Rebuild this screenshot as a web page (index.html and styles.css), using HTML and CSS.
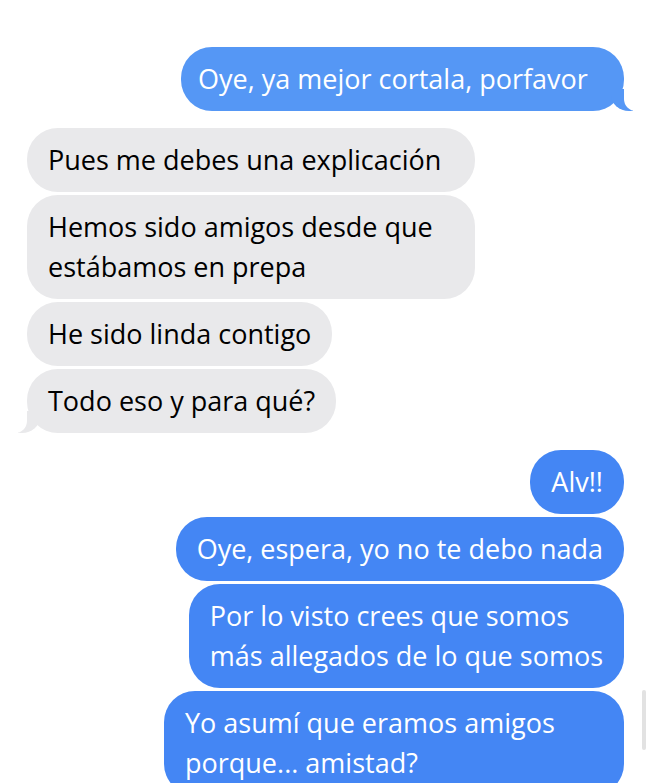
FILE: index.html
```html
<!DOCTYPE html>
<html lang="es">
<head>
    <meta charset="UTF-8">
    <meta name="viewport" content="width=device-width, initial-scale=1.0">
    <title>Mensajes</title>
    <link rel="stylesheet" href="styles.css">
</head>
<body>
    <div class="chat">
        <div class="group">
            <p class="bubble sent tail opener">Oye, ya mejor cortala, porfavor</p>
        </div>

        <div class="group">
            <p class="bubble received wide">Pues me debes una explicación</p>
            <p class="bubble received wide">Hemos sido amigos desde que<br>estábamos en prepa</p>
            <p class="bubble received">He sido linda contigo</p>
            <p class="bubble received tail">Todo eso y para qué?</p>
        </div>

        <div class="group">
            <p class="bubble sent">Alv!!</p>
            <p class="bubble sent">Oye, espera, yo no te debo nada</p>
            <p class="bubble sent">Por lo visto crees que somos<br>más allegados de lo que somos</p>
            <p class="bubble sent widest">Yo asumí que eramos amigos<br>porque... amistad?</p>
        </div>

        <div class="scrollbar"></div>
    </div>
</body>
</html>
```

FILE: styles.css
```css
body {
    font-family: "Open Sans", Lato, Arial, sans-serif;
    background-color: #fff;
    margin: 0;
    padding: 0;
}

.chat {
    position: relative;
    height: 783px;
    overflow: hidden;
    padding: 47px 26px 0 27px;
    box-sizing: border-box;
    display: flex;
    flex-direction: column;
    gap: 17px;
}

.group {
    display: flex;
    flex-direction: column;
    gap: 3px;
}

.bubble {
    position: relative;
    box-sizing: border-box;
    margin: 0;
    padding: 12px 21px;
    font-size: 27px;
    line-height: 40px;
    border-radius: 31px;
    white-space: nowrap;
}

.received {
    align-self: flex-start;
    background: #e9e9eb;
    color: #000;
}

.sent {
    align-self: flex-end;
    background: #4486f4;
    color: #fff;
}

/* bubbles that came out wider than their text */
.opener {
    width: 443px;
    padding-left: 17px;
    background: #5597f5;
}

.wide {
    width: 448px;
}

.widest {
    width: 460px;
}

/* little tails on the last bubble */
.tail::before,
.tail::after {
    content: "";
    position: absolute;
    bottom: 0;
    height: 22px;
}

.sent.tail::before {
    right: -9px;
    width: 22px;
    background: #5597f5;
    border-bottom-left-radius: 18px 16px;
}

.sent.tail::after {
    right: -28px;
    width: 28px;
    background: #fff;
    border-bottom-left-radius: 12px;
}

.received.tail::before {
    left: -9px;
    width: 22px;
    background: #e9e9eb;
    border-bottom-right-radius: 18px 16px;
}

.received.tail::after {
    left: -28px;
    width: 28px;
    background: #fff;
    border-bottom-right-radius: 12px;
}

.scrollbar {
    position: absolute;
    right: 4px;
    top: 690px;
    width: 4px;
    height: 60px;
    border-radius: 2px;
    background: #e2e2e2;
}
```
